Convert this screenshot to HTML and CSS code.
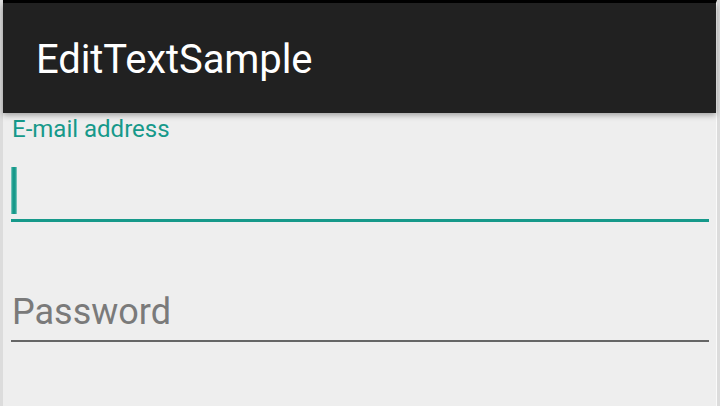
FILE: index.html
```html
<!DOCTYPE html>
<html lang="en">
<head>
  <meta charset="UTF-8" />
  <meta name="viewport" content="width=device-width, initial-scale=1.0"/>
  <title>EditTextSample</title>
  <link rel="stylesheet" href="styles.css">
</head>
<body>
  <div class="tela">
    <div class="barra">
      <h1>EditTextSample</h1>
    </div>

    <div class="conteudo">
      <div class="campo ativo">
        <label for="email">E-mail address</label>
        <div class="linha">
          <span class="cursor"></span>
          <input id="email" type="email" />
        </div>
      </div>

      <div class="campo">
        <div class="linha">
          <input id="senha" type="password" placeholder="Password" />
        </div>
      </div>
    </div>
  </div>
</body>
</html>
```

FILE: styles.css
```css
html, body {
  margin: 0;
  height: 100%;
}
body {
  font-family: Roboto, "Liberation Sans", sans-serif;
  background-color: #dcdcdc;
  padding: 0 3px;
  box-sizing: border-box;
}
.tela {
  height: 100%;
  background-color: #eeeeee;
  border-top: 3px solid #000000;
  border-right: 1px solid #fafafa;
  box-sizing: border-box;
}
.barra {
  height: 110px;
  background-color: #212121;
  display: flex;
  align-items: center;
  padding-left: 33px;
  box-shadow: 0 2px 6px rgba(0, 0, 0, 0.35);
  position: relative;
}
.barra h1 {
  margin: 0;
  margin-top: 2px;
  color: white;
  font-weight: normal;
  font-size: 40px;
  letter-spacing: -0.1px;
}
.conteudo {
  padding: 0 7px 0 8px;
}
.campo label {
  display: block;
  color: #16998a;
  font-size: 24px;
  line-height: 28px;
  padding-top: 2px;
  margin-left: 1px;
}
.linha {
  display: flex;
  align-items: flex-end;
  height: 44px;
  padding-bottom: 6px;
  border-bottom: 2px solid #666666;
}
.ativo .linha {
  height: 71px;
  padding-bottom: 5px;
  border-bottom: 3px solid #16998a;
}
.cursor {
  width: 6px;
  height: 47px;
  background: linear-gradient(to right, #8fcfc7, #16998a 30%, #16998a 70%, #8fcfc7);
}
.campo input {
  border: none;
  outline: none;
  background: transparent;
  font-family: Roboto, "Liberation Sans", sans-serif;
  font-size: 36px;
  color: #333333;
  padding: 0;
  margin-left: 1px;
  height: 44px;
  flex: 1;
}
.campo input::placeholder {
  color: #7a7a7a;
}
.campo + .campo {
  margin-top: 68px;
}
```
